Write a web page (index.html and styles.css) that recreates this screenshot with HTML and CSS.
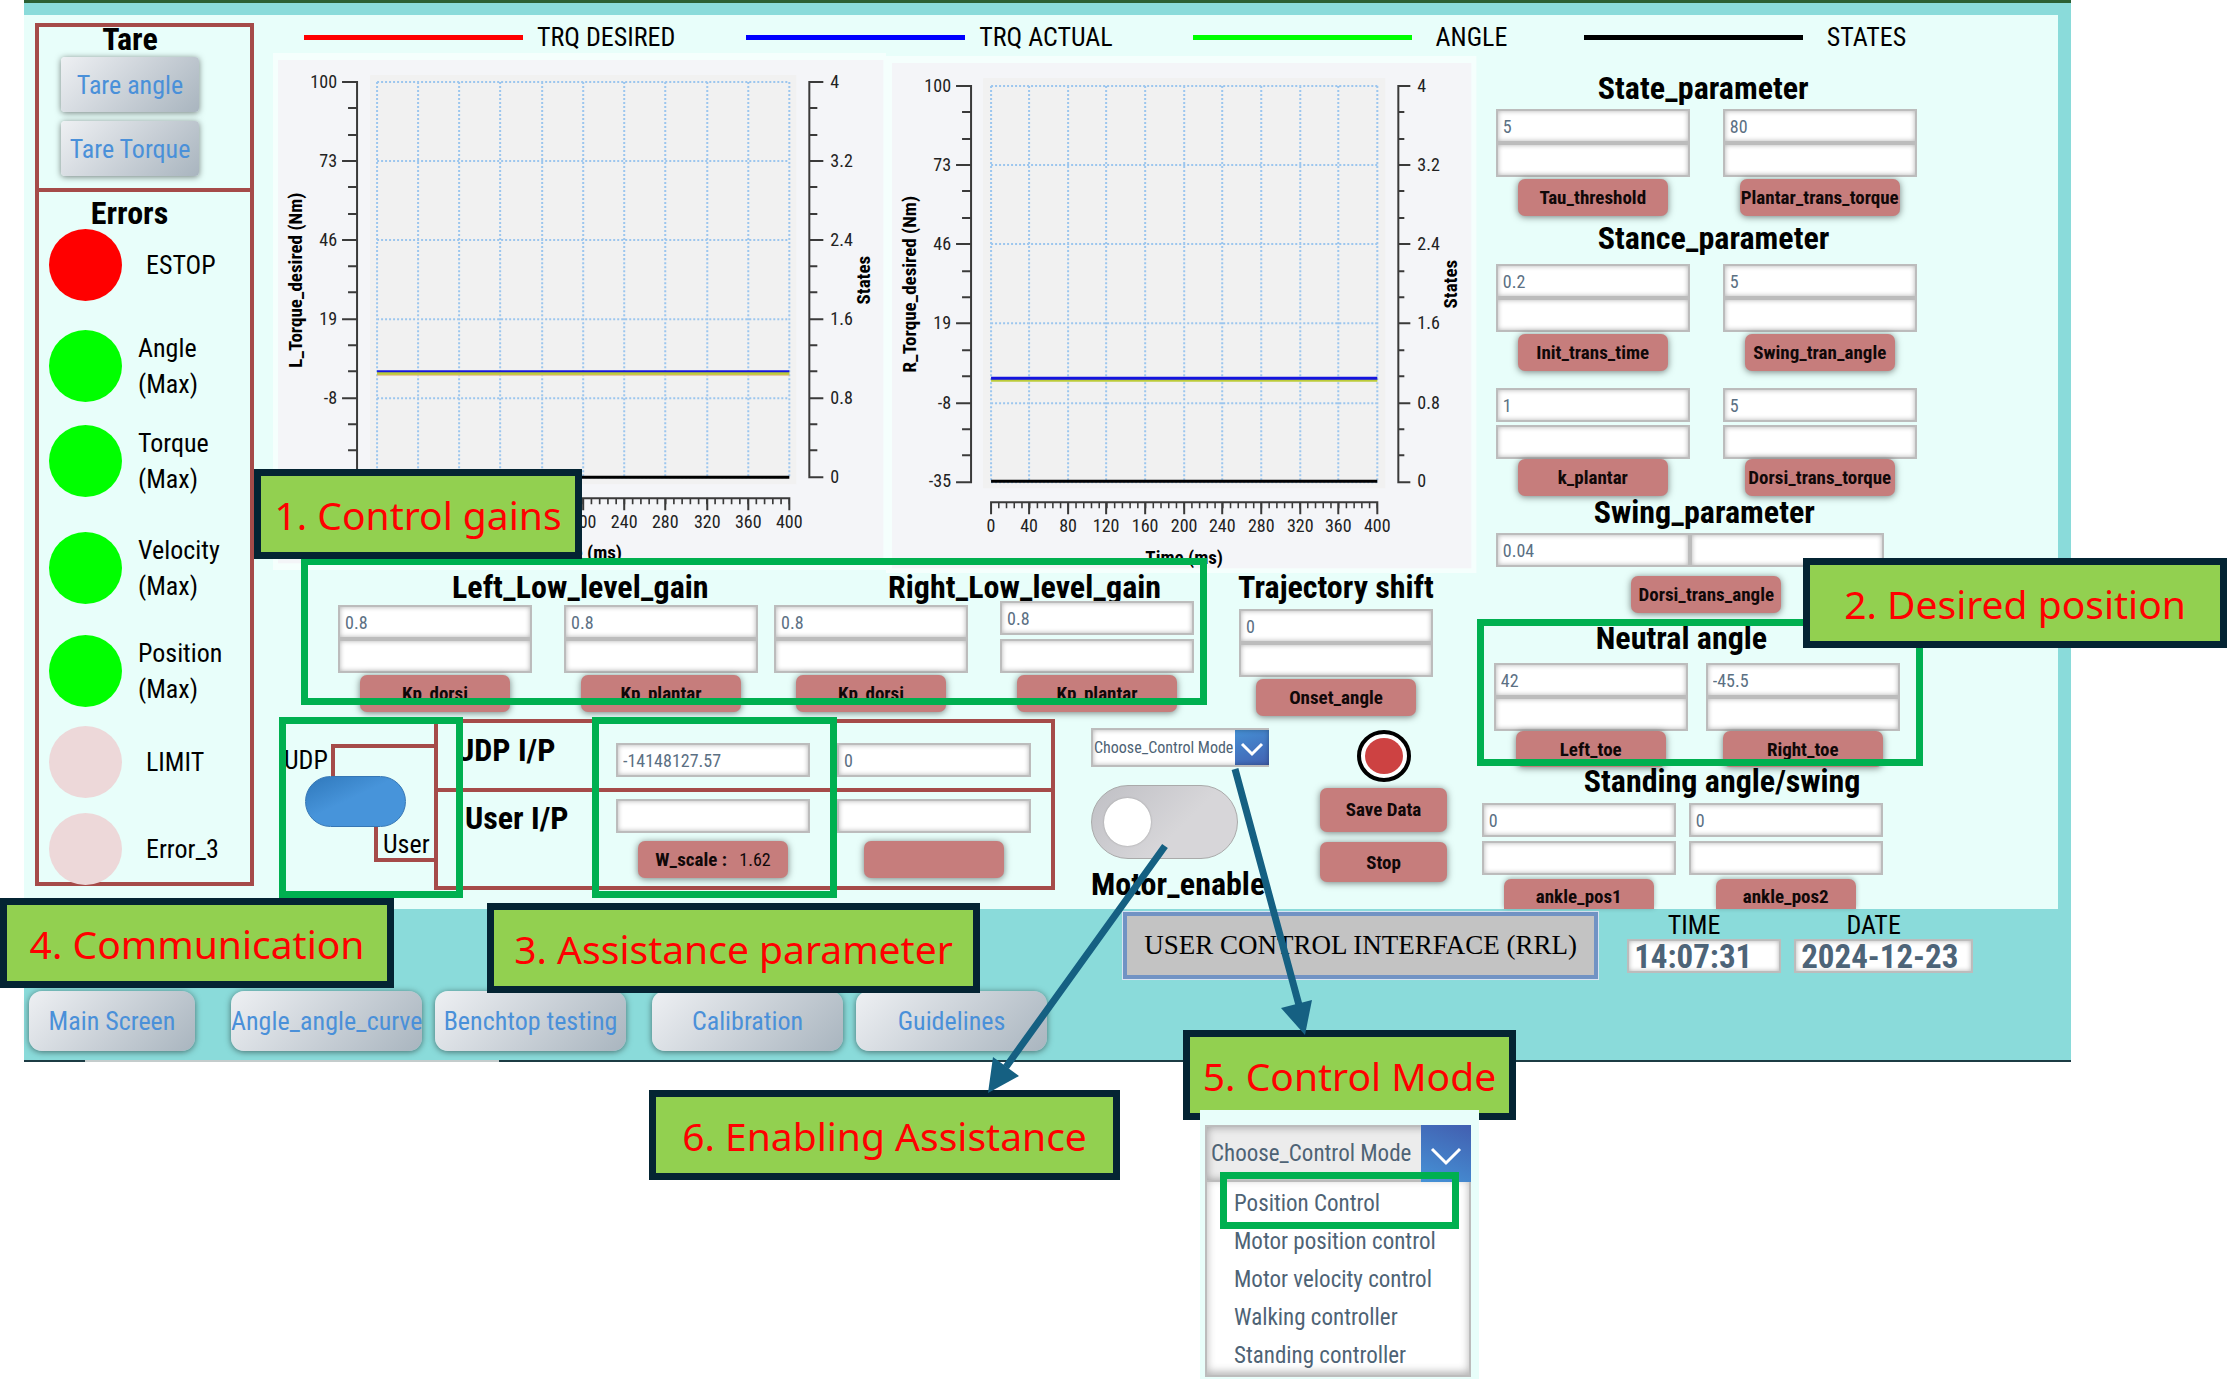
FILE: index.html
```html
<!DOCTYPE html>
<html lang="en">
<head>
<meta charset="utf-8">
<title>User Control Interface (RRL)</title>
<link rel="stylesheet" href="styles.css">
</head>
<body>
<div class="page">
<main class="board">
  <div class="panel">
    <aside class="sidebar">
      <section class="tare">
        <h2>Tare</h2>
        <button class="steel" type="button">Tare angle</button>
        <button class="steel" type="button">Tare Torque</button>
      </section>
      <section class="errors">
        <h2>Errors</h2>
        <ul>
          <li><span class="lamp lamp-red"></span><span class="single">ESTOP</span></li>
          <li><span class="lamp lamp-green"></span><span>Angle<br>(Max)</span></li>
          <li><span class="lamp lamp-green"></span><span>Torque<br>(Max)</span></li>
          <li><span class="lamp lamp-green"></span><span>Velocity<br>(Max)</span></li>
          <li><span class="lamp lamp-green"></span><span>Position<br>(Max)</span></li>
          <li><span class="lamp lamp-off"></span><span class="single">LIMIT</span></li>
          <li><span class="lamp lamp-off"></span><span class="single">Error_3</span></li>
        </ul>
      </section>
    </aside>

    <ul class="legend">
      <li><i class="key key-red"></i>TRQ DESIRED</li>
      <li><i class="key key-blue"></i>TRQ ACTUAL</li>
      <li class="wide"><i class="key key-green"></i>ANGLE</li>
      <li class="wide"><i class="key key-black"></i>STATES</li>
    </ul>

    <div class="center">
      <div class="charts">
        <svg class="chart chart-left" viewBox="273 53 613 517" role="img" aria-label="Left torque chart">
          <rect class="rim" x="273" y="53" width="613" height="517"/>
          <rect class="face" x="278" y="60" width="605" height="503"/>
          <rect class="plot" x="370" y="75" width="426" height="409"/>
          <path class="grid" d="M377 82H789M377 161H789M377 240H789M377 319H789M377 398H789M377 477H789M377 82V477M418 82V477M459 82V477M500 82V477M542 82V477M583 82V477M624 82V477M665 82V477M707 82V477M748 82V477M789 82V477"/>
          <path class="axis" d="M342 82H357V477H342M342 161H357M342 240H357M342 319H357M342 398H357M348 108H357M348 135H357M348 187H357M348 214H357M348 266H357M348 292H357M348 345H357M348 371H357M348 424H357M348 450H357"/>
          <path class="axis" d="M823 82H809V477H823M809 161H823M809 240H823M809 319H823M809 398H823M809 108H817M809 135H817M809 187H817M809 214H817M809 266H817M809 292H817M809 345H817M809 371H817M809 424H817M809 450H817"/>
          <path class="axis" d="M377 510V498H789V510M418 498V510M459 498V510M500 498V510M542 498V510M583 498V510M624 498V510M665 498V510M707 498V510M748 498V510"/>
          <path class="minor" pathLength="500" d="M377 501H789"/>
          <path class="line-tan" d="M377 374H789"/><path class="line-olive" d="M377 373H789"/><path class="line-blue thin" d="M377 371H789"/><path class="line-black" d="M377 477H789"/>
          <g class="ticks end"><text x="337" y="88">100</text><text x="337" y="167">73</text><text x="337" y="246">46</text><text x="337" y="325">19</text><text x="337" y="404">-8</text></g>
          <g class="ticks"><text x="830" y="88">4</text><text x="830" y="167">3.2</text><text x="830" y="246">2.4</text><text x="830" y="325">1.6</text><text x="830" y="404">0.8</text><text x="830" y="483">0</text></g>
          <g class="ticks mid"><text x="583" y="528">200</text><text x="624" y="528">240</text><text x="665" y="528">280</text><text x="707" y="528">320</text><text x="748" y="528">360</text><text x="789" y="528">400</text></g>
          <text class="name" x="583" y="559">Time (ms)</text>
          <text class="name" transform="translate(302 280) rotate(-90)">L_Torque_desired (Nm)</text>
          <text class="name" transform="translate(870 280) rotate(-90)">States</text>
        </svg>
        <svg class="chart chart-right" viewBox="886 56 590 517" role="img" aria-label="Right torque chart">
          <rect class="rim" x="886" y="56" width="590" height="517"/>
          <rect class="face" x="892" y="63" width="579" height="505"/>
          <rect class="plot" x="983" y="78" width="402" height="410"/>
          <path class="grid" d="M991 86H1377M991 165H1377M991 244H1377M991 323H1377M991 403H1377M991 482H1377M991 86V482M1029 86V482M1068 86V482M1106 86V482M1145 86V482M1184 86V482M1222 86V482M1261 86V482M1300 86V482M1338 86V482M1377 86V482"/>
          <path class="axis" d="M956 86H971V482H956M956 165H971M956 244H971M956 323H971M956 403H971M962 112H971M962 139H971M962 191H971M962 218H971M962 271H971M962 297H971M962 350H971M962 376H971M962 429H971M962 455H971"/>
          <path class="axis" d="M1410 86H1398V482H1410M1398 165H1410M1398 244H1410M1398 323H1410M1398 403H1410M1398 112H1404M1398 139H1404M1398 191H1404M1398 218H1404M1398 271H1404M1398 297H1404M1398 350H1404M1398 376H1404M1398 429H1404M1398 455H1404"/>
          <path class="axis" d="M991 514V502H1377V514M1029 502V514M1068 502V514M1106 502V514M1145 502V514M1184 502V514M1222 502V514M1261 502V514M1300 502V514M1338 502V514"/>
          <path class="minor" pathLength="500" d="M991 505H1377"/>
          <path class="line-olive" d="M991 380H1377"/><path class="line-blue" d="M991 378H1377"/><path class="line-black" d="M991 481H1377"/>
          <g class="ticks end"><text x="951" y="92">100</text><text x="951" y="171">73</text><text x="951" y="250">46</text><text x="951" y="329">19</text><text x="951" y="409">-8</text><text x="951" y="487">-35</text></g>
          <g class="ticks"><text x="1417" y="92">4</text><text x="1417" y="171">3.2</text><text x="1417" y="250">2.4</text><text x="1417" y="329">1.6</text><text x="1417" y="409">0.8</text><text x="1417" y="487">0</text></g>
          <g class="ticks mid"><text x="991" y="532">0</text><text x="1029" y="532">40</text><text x="1068" y="532">80</text><text x="1106" y="532">120</text><text x="1145" y="532">160</text><text x="1184" y="532">200</text><text x="1222" y="532">240</text><text x="1261" y="532">280</text><text x="1300" y="532">320</text><text x="1338" y="532">360</text><text x="1377" y="532">400</text></g>
          <text class="name" x="1184" y="564">Time (ms)</text>
          <text class="name" transform="translate(916 284) rotate(-90)">R_Torque_desired (Nm)</text>
          <text class="name" transform="translate(1457 284) rotate(-90)">States</text>
        </svg>
      </div>

      <section class="gains">
        <div class="gain-group">
          <h2>Left_Low_level_gain</h2>
          <div class="fields">
            <div class="field"><input aria-label="Left Kp dorsi current" value="0.8"><input aria-label="Left Kp dorsi new"><button type="button">Kp_dorsi</button></div>
            <div class="field"><input aria-label="Left Kp plantar current" value="0.8"><input aria-label="Left Kp plantar new"><button class="long" type="button">Kp_plantar</button></div>
          </div>
        </div>
        <div class="gain-group">
          <h2>Right_Low_level_gain</h2>
          <div class="fields">
            <div class="field"><input aria-label="Right Kp dorsi current" value="0.8"><input aria-label="Right Kp dorsi new"><button type="button">Kp_dorsi</button></div>
            <div class="field split"><input aria-label="Right Kp plantar current" value="0.8"><input aria-label="Right Kp plantar new"><button class="long" type="button">Kp_plantar</button></div>
          </div>
        </div>
        <div class="trajectory">
          <h2>Trajectory shift</h2>
          <div class="field"><input aria-label="Onset angle current" value="0"><input aria-label="Onset angle new"><button class="long" type="button">Onset_angle</button></div>
        </div>
        <div class="frame frame-gains"></div>
      </section>

      <section class="lower">
        <div class="source">
          <div class="source-top"><span>UDP</span><i></i></div>
          <input class="source-switch" type="checkbox" aria-label="UDP or User input">
          <div class="source-bottom">User</div>
        </div>
        <div class="io">
          <div class="io-row io-udp">
            <h2>UDP I/P</h2>
            <div class="field"><input aria-label="UDP scale" value="-14148127.57"></div>
            <div class="field"><input aria-label="UDP value" value="0"></div>
          </div>
          <div class="io-row io-user">
            <h2>User I/P</h2>
            <div class="field"><input aria-label="User scale"><button type="button">W_scale : <span>1.62</span></button></div>
            <div class="field"><input aria-label="User value"><button class="short" type="button" aria-label="Set value"></button></div>
          </div>
        </div>
        <div class="controls">
          <div class="mode">
            <select aria-label="Control mode"><option>Choose_Control Mode</option></select>
            <svg viewBox="0 0 34 39"><path d="M7 16L17 26L27 16"/></svg>
          </div>
          <input class="motor" id="motor" type="checkbox">
          <label class="title" for="motor">Motor_enable</label>
        </div>
        <div class="record">
          <svg viewBox="0 0 54 52"><ellipse cx="27" cy="26" rx="25" ry="24" fill="#fff" stroke="#000" stroke-width="4"/><ellipse cx="27" cy="26" rx="19" ry="18" fill="#cd4242"/></svg>
          <button class="save" type="button">Save Data</button>
          <button class="stop" type="button">Stop</button>
        </div>
        <div class="frame frame-source"></div>
        <div class="frame frame-assist"></div>
      </section>
    </div>

    <div class="params">
      <section class="param">
        <h2>State_parameter</h2>
        <div class="fields">
          <div class="field"><input aria-label="Tau threshold current" value="5"><input aria-label="Tau threshold new"><button type="button">Tau_threshold</button></div>
          <div class="field"><input aria-label="Plantar trans torque current" value="80"><input aria-label="Plantar trans torque new"><button class="long" type="button">Plantar_trans_torque</button></div>
        </div>
      </section>
      <section class="param stance">
        <h2>Stance_parameter</h2>
        <div class="fields">
          <div class="field"><input aria-label="Init trans time current" value="0.2"><input aria-label="Init trans time new"><button type="button">Init_trans_time</button></div>
          <div class="field"><input aria-label="Swing tran angle current" value="5"><input aria-label="Swing tran angle new"><button type="button">Swing_tran_angle</button></div>
        </div>
        <div class="fields">
          <div class="field split"><input aria-label="k plantar current" value="1"><input aria-label="k plantar new"><button type="button">k_plantar</button></div>
          <div class="field split"><input aria-label="Dorsi trans torque current" value="5"><input aria-label="Dorsi trans torque new"><button type="button">Dorsi_trans_torque</button></div>
        </div>
      </section>
      <section class="param swing">
        <h2>Swing_parameter</h2>
        <div class="pair"><input aria-label="Dorsi trans angle current" value="0.04"><input aria-label="Dorsi trans angle new"></div>
        <button type="button">Dorsi_trans_angle</button>
      </section>
      <section class="param neutral">
        <h2>Neutral angle</h2>
        <div class="fields">
          <div class="field"><input aria-label="Left toe current" value="42"><input aria-label="Left toe new"><button type="button">Left_toe</button></div>
          <div class="field"><input aria-label="Right toe current" value="-45.5"><input aria-label="Right toe new"><button class="long" type="button">Right_toe</button></div>
        </div>
        <div class="frame frame-neutral"></div>
      </section>
      <section class="param standing">
        <h2>Standing angle/swing</h2>
        <div class="fields">
          <div class="field split"><input aria-label="Ankle position 1 current" value="0"><input aria-label="Ankle position 1 new"><button type="button">ankle_pos1</button></div>
          <div class="field split"><input aria-label="Ankle position 2 current" value="0"><input aria-label="Ankle position 2 new"><button class="short" type="button">ankle_pos2</button></div>
        </div>
      </section>
    </div>
  </div>

  <footer class="footer">
    <div class="status">
      <h1>USER CONTROL INTERFACE (RRL)</h1>
      <div class="clock"><label for="time">TIME</label><input id="time" value="14:07:31"></div>
      <div class="clock date"><label for="date">DATE</label><input id="date" value="2024-12-23"></div>
    </div>
    <nav class="nav">
      <button class="steel home" type="button">Main Screen</button>
      <div><button class="steel" type="button">Angle_angle_curve</button><button class="steel" type="button">Benchtop testing</button></div>
      <div><button class="steel" type="button">Calibration</button><button class="steel" type="button">Guidelines</button></div>
    </nav>
  </footer>
</main>

<section class="menu">
  <button class="menu-head" type="button" aria-haspopup="listbox" aria-expanded="true"><span>Choose_Control Mode</span><svg viewBox="0 0 50 57"><path d="M11 24L25 38L39 24"/></svg></button>
  <ul role="listbox" aria-label="Control mode">
    <li role="option">Position Control</li>
    <li role="option">Motor position control</li>
    <li role="option">Motor velocity control</li>
    <li role="option">Walking controller</li>
    <li role="option">Standing controller</li>
  </ul>
  <div class="frame frame-option"></div>
</section>

<p class="callout c1">1. Control gains</p>
<p class="callout c2">2. Desired position</p>
<p class="callout c3">3. Assistance parameter</p>
<p class="callout c4">4. Communication</p>
<p class="callout c5">5. Control Mode</p>
<p class="callout c6">6. Enabling Assistance</p>
<svg class="arrows" viewBox="980 760 340 340">
  <path d="M1165 846L1006 1067M1235 769L1299 1005"/>
  <path class="tip" d="M988 1093L993 1057L1019 1076ZM1305 1035L1281 1008L1312 1000Z"/>
</svg>
</div>
</body>
</html>
```

FILE: styles.css
```css
:root {
  --ui: "Roboto Condensed", "Liberation Sans Narrow", Roboto, "Liberation Sans", sans-serif;
  --teal: #8adbda;
  --mint: #e8fefa;
  --rust: #c67d7c;
  --maroon: #a54b49;
  --green: #00b050;
}

* { box-sizing: border-box; }
body { margin: 0; background: #fff; font-family: var(--ui); font-size: 26px; line-height: 36px; color: #000; }
h1, h2, p, ul { margin: 0; padding: 0; }
ul { list-style: none; }
h2, .title { font-size: 32px; line-height: 28px; font-weight: 700; white-space: nowrap; }
button, input, select { font-family: inherit; margin: 0; }
svg { display: block; }

.page { position: relative; overflow: hidden; }
.board { margin: 0 7% 0 24px; border-top: 3px solid #2b5f33; background: var(--teal); padding-top: 12px; }
.panel { display: grid; grid-template-columns: 249px minmax(0, 1203fr) minmax(0, 581fr); grid-template-rows: 38px auto; margin-right: 13px; background: var(--mint); }

/* shared controls */
input:not([type="checkbox"]) { display: block; width: 194px; height: 34px; padding: 0 5px; border: 2px solid #bcbcbc; background: #fff; box-shadow: inset 0 0 5px rgba(0, 0, 0, .3); font-size: 18px; color: #5b7083; border-radius: 0; }
.field { display: flex; flex-direction: column; align-items: center; width: 194px; }
.field.split input + input { margin-top: 4px; }
.field button, .swing button, .record button { width: 150px; height: 37px; margin-top: 2px; padding: 0; border: 0; border-radius: 7px; background: var(--rust); box-shadow: 0 1px 7px rgba(0, 0, 0, .5); font-size: 19px; line-height: 37px; font-weight: 700; color: #100808; white-space: nowrap; }
.field button.long { width: 160px; }
.field button.short { width: 140px; }
.fields { display: flex; align-items: flex-end; gap: 32px; }
.steel { border: 0; padding: 0; border-radius: 4px; background: linear-gradient(135deg, #eef0f3, #c8cfd6 55%, #a9b5bf); box-shadow: 0 1px 6px rgba(0, 0, 0, .5); font-size: 26px; color: #4a90d9; white-space: nowrap; }
.frame { position: absolute; border: 7px solid var(--green); pointer-events: none; }

/* sidebar */
.sidebar { grid-row: 1 / 3; display: flex; flex-direction: column; margin: 8px 19px 23px 11px; border: 4px solid var(--maroon); }
.tare { display: flex; flex-direction: column; align-items: center; gap: 9px; height: 165px; padding: 0 29px 0 0; border-bottom: 4px solid var(--maroon); }
.tare h2 { line-height: 24px; margin-bottom: -3px; }
.tare .steel { width: 138px; height: 55px; }
.errors { padding-top: 7px; }
.errors h2 { margin-bottom: 2px; padding: 0 30px 0 0; text-align: center; }
.errors ul { display: grid; grid-template-rows: 101px 95px 107px 103px 91px 87px 68px; }
.errors li { display: flex; align-items: center; gap: 16px; height: 72px; padding-left: 10px; }
.lamp { width: 73px; height: 72px; border-radius: 50%; }
.lamp-red { background: #f00; }
.lamp-green { background: #0f0; }
.lamp-off { background: #edd8d9; }
.single { padding-left: 8px; }

/* legend */
.legend { grid-column: 2 / 4; display: grid; grid-template-columns: 442fr 446fr 391fr 474fr; padding: 6px 0 0 31px; }
.legend li { display: flex; align-items: center; gap: 14px; line-height: 33px; }
.legend .wide { gap: 24px; }
.key { width: 219px; height: 5px; }
.key-red { background: #f00; }
.key-blue { background: #00f; }
.key-green { background: #0f0; }
.key-black { background: #000; }

/* charts */
.charts { display: grid; grid-template-columns: 613fr 590fr; align-items: start; }
.chart { width: 100%; height: auto; }
.chart-right { margin-top: 3px; }
.rim { fill: #f5fffd; }
.face { fill: #f4f5f8; }
.plot { fill: #f1f1f1; }
.grid { fill: none; stroke: #9cc6ee; stroke-width: 2; stroke-dasharray: 2 2; }
.axis { fill: none; stroke: #3a3a3a; stroke-width: 2; }
.minor { fill: none; stroke: #3a3a3a; stroke-width: 6; stroke-dasharray: 2 8; stroke-dashoffset: 1; }
.line-tan { stroke: #e6b98c; stroke-width: 3; }
.line-olive { stroke: #bccb3a; stroke-width: 3; }
.line-blue { stroke: #1414e0; stroke-width: 3; }
.line-blue.thin { stroke-width: 2; }
.line-black { stroke: #000; stroke-width: 3; }
.ticks { font-size: 18px; fill: #222; }
.end { text-anchor: end; }
.mid { text-anchor: middle; }
.name { font-size: 19px; font-weight: 700; text-anchor: middle; }

/* gains */
.gains { position: relative; display: flex; align-items: flex-start; height: 143px; padding-left: 65px; }
.gain-group { margin-right: 16px; }
.gain-group h2 { width: 420px; padding-left: 114px; }
.gain-group .fields { height: 111px; }
.trajectory { width: 194px; margin-left: 29px; }
.trajectory h2 { display: flex; justify-content: center; margin-bottom: 8px; }
.frame-gains { left: 28px; top: -15px; width: 906px; height: 147px; }

/* input source, parameters and motor controls */
.lower { position: relative; display: flex; align-items: flex-start; padding-top: 3px; }
.source { width: 161px; padding: 25px 0 0 11px; }
.source-top { display: flex; gap: 3px; height: 32px; line-height: 32px; }
.source-top i { flex: 1; border: solid var(--maroon); border-width: 4px 0 0 4px; }
.source-switch { display: block; appearance: none; width: 101px; height: 51px; margin: 0 0 0 21px; border: 1px solid #3677b5; border-radius: 26px; background: linear-gradient(155deg, #2f78bb, #4794da 45%); }
.source-bottom { height: 35px; margin-left: 90px; padding-left: 5px; border: solid var(--maroon); border-width: 0 0 4px 4px; line-height: 34px; }
.io { width: 621px; border: 4px solid var(--maroon); }
.io-row { display: flex; align-items: flex-start; gap: 27px; }
.io-row h2 { width: 151px; }
.io-udp { padding-top: 20px; height: 69px; border-bottom: 4px solid var(--maroon); }
.io-udp h2 { padding-left: 18px; margin-top: -7px; }
.io-user { padding: 7px 0 8px; }
.io-user h2 { padding-left: 27px; margin-top: 5px; }
.io-user .field button { margin-top: 8px; }
.io-user button span { margin-left: 8px; font-size: 18px; font-weight: 400; }
.controls { width: 178px; margin-left: 36px; padding-top: 9px; }
.mode { position: relative; }
.mode select { display: block; appearance: none; width: 178px; height: 39px; padding: 0 24px 0 1px; border: 2px solid #bcbcbc; border-right: 0; border-radius: 0; background: linear-gradient(160deg, #4592d6, #425fb0) right / 34px 100% no-repeat border-box, #fff; box-shadow: inset 0 0 5px rgba(0, 0, 0, .3); font-size: 16px; color: #4e6375; }
.mode svg { position: absolute; right: 0; top: 0; width: 34px; height: 39px; pointer-events: none; }
.mode path, .menu-head path { fill: none; stroke: #fff; stroke-width: 3; }
.motor { display: block; appearance: none; width: 147px; height: 74px; margin: 18px 0 11px; padding: 12px; border: 1px solid #aaa; border-radius: 37px; background: linear-gradient(135deg, #bfbfc4, #d7d6d9 60%); }
.motor::before { content: ""; display: block; width: 47px; height: 48px; border-radius: 50%; background: #fff; box-shadow: 0 0 2px #999; }
.title { display: block; }
.record { display: flex; flex-direction: column; width: 127px; margin-left: 51px; padding-top: 11px; }
.record svg { width: 54px; height: 52px; align-self: center; }
.record button { width: 127px; }
.record .save { height: 44px; margin-top: 6px; line-height: 44px; }
.record .stop { height: 40px; margin-top: 10px; }
.frame-source { left: 6px; top: 1px; width: 184px; height: 181px; }
.frame-assist { left: 319px; top: 1px; width: 245px; height: 181px; }

/* parameter column */
.params { padding-top: 21px; }
.param { position: relative; width: 440px; padding-left: 19px; }
.param h2 { padding-left: 102px; margin-bottom: 7px; }
.param .fields { gap: 33px; }
.stance { padding-top: 8px; }
.stance h2 { margin-bottom: 12px; }
.stance .fields + .fields { margin-top: 17px; }
.stance .split input + input { margin-top: 3px; }
.stance .split button { margin-top: 0; }
.swing { padding-top: 2px; }
.swing h2 { padding-left: 98px; }
.swing .pair { display: flex; width: 386px; }
.swing button { display: block; margin: 9px auto 0; }
.neutral { padding: 11px 0 0 17px; }
.neutral h2 { margin-bottom: 11px; }
.neutral .fields { gap: 18px; }
.neutral .field button { height: 36px; margin-top: 0; }
.standing { padding-left: 5px; }
.standing h2 { margin-bottom: 8px; }
.standing .fields { gap: 13px; }
.standing .field button { height: 30px; margin-top: 4px; border-radius: 7px 7px 0 0; line-height: 36px; overflow: hidden; box-shadow: 0 -1px 5px rgba(0, 0, 0, .3); }
.frame-neutral { left: 0; top: 6px; width: 446px; height: 147px; }

/* footer */
.footer { padding: 3px 98px 11px 5px; background: linear-gradient(90deg, #1c3c44 61px, #c4cccc 61px 475px, #1c3c44 475px) bottom / 100% 2px no-repeat; }
.status { display: flex; justify-content: flex-end; height: 67px; }
.status h1 { width: 475px; margin-right: 29px; border: 4px solid #7193c4; outline: 1px solid #d8e4f2; background: #c3c3c3; font: 400 27px/58px "Liberation Serif", serif; text-align: center; white-space: nowrap; }
.clock { width: 154px; margin-top: -1px; }
.clock.date { width: 179px; margin-left: 13px; }
.clock label { display: block; padding-right: 20px; line-height: 28px; text-align: center; }
.clock input:not([type="checkbox"]) { width: 100%; font-size: 33px; font-weight: 700; color: #4d6478; }
.nav { display: flex; gap: 26px; margin-top: 12px; }
.nav div { display: flex; gap: 13px; }
.nav .steel { width: 191px; height: 60px; border-radius: 13px; }
.nav .home { width: 166px; margin-right: 10px; }

/* opened mode list */
.menu { position: relative; z-index: 3; width: 279px; margin: 48px 0 0 1200px; padding: 15px 8px 6px 5px; background: var(--mint); color: #4e6375; }
.menu-head { display: flex; align-items: center; width: 100%; height: 57px; padding: 0; border: 2px solid #bcbcbc; border-right: 0; background: #ececec; box-shadow: inset 0 0 8px rgba(0, 0, 0, .35); font-size: 23px; color: inherit; }
.menu-head span { flex: 1; padding-left: 4px; text-align: left; white-space: nowrap; }
.menu-head svg { width: 50px; height: 57px; background: linear-gradient(20deg, #4592d6, #425fb0); }
.menu ul { padding: 3px 0 0 27px; border: 2px solid #bcbcbc; border-top: 0; background: #fff; box-shadow: inset 0 -3px 8px rgba(0, 0, 0, .3); font-size: 23px; }
.menu li { height: 38px; line-height: 38px; }
.frame-option { left: 20px; top: 62px; width: 239px; height: 57px; }

/* annotations */
.callout { position: absolute; height: 90px; border: 7px solid #042433; background: #92d050; color: #f00; font: 400 39px/78px "Noto Sans", sans-serif; text-align: center; white-space: nowrap; }
.c1 { left: 254px; top: 469px; width: 328px; }
.c2 { right: 0; top: 558px; width: 424px; }
.c3 { left: 487px; top: 903px; width: 493px; }
.c4 { left: 0; top: 898px; width: 394px; }
.c5 { left: 1183px; top: 1030px; width: 333px; }
.c6 { left: 649px; top: 1090px; width: 471px; }
.arrows { position: absolute; z-index: 4; left: 980px; top: 760px; width: 340px; height: 340px; pointer-events: none; }
.arrows path { fill: none; stroke: #156082; stroke-width: 7; }
.arrows .tip { fill: #156082; stroke: none; }
```
